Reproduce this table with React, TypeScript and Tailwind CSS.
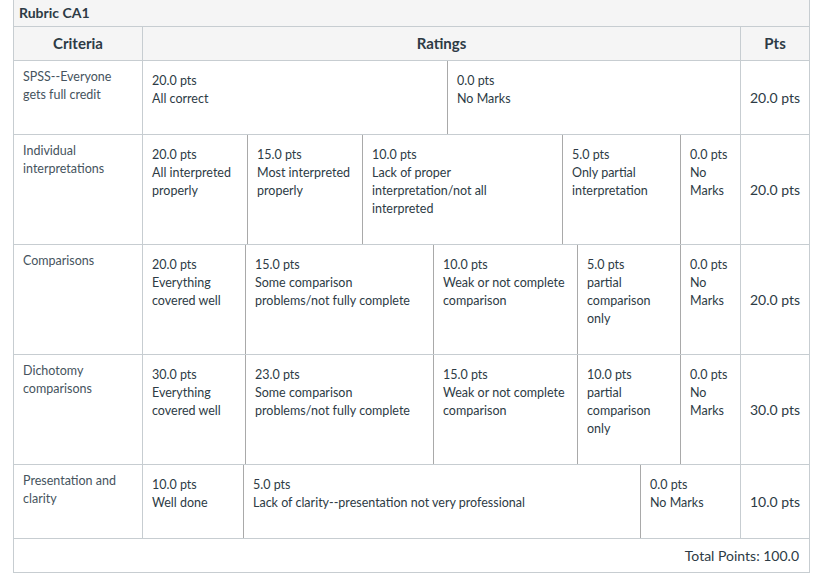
// Rubric table — criteria, rating tiers and points per row, total at the bottom.

interface Rating {
  pts: string;
  label: string;
  width: number;
}

interface Criterion {
  name: string;
  pts: string;
  ratings: Rating[];
}

const CRITERIA: Criterion[] = [
  {
    name: 'SPSS--Everyone gets full credit',
    pts: '20.0 pts',
    ratings: [
      { pts: '20.0 pts', label: 'All correct', width: 305 },
      { pts: '0.0 pts', label: 'No Marks', width: 292 },
    ],
  },
  {
    name: 'Individual interpretations',
    pts: '20.0 pts',
    ratings: [
      { pts: '20.0 pts', label: 'All interpreted properly', width: 105 },
      { pts: '15.0 pts', label: 'Most interpreted properly', width: 115 },
      // wraps one word earlier in the original
      { pts: '10.0 pts', label: 'Lack of proper interpretation/not all\ninterpreted', width: 200 },
      { pts: '5.0 pts', label: 'Only partial interpretation', width: 118 },
      { pts: '0.0 pts', label: 'No Marks', width: 59 },
    ],
  },
  {
    name: 'Comparisons',
    pts: '20.0 pts',
    ratings: [
      { pts: '20.0 pts', label: 'Everything covered well', width: 103 },
      { pts: '15.0 pts', label: 'Some comparison problems/not fully complete', width: 188 },
      { pts: '10.0 pts', label: 'Weak or not complete comparison', width: 144 },
      { pts: '5.0 pts', label: 'partial comparison only', width: 103 },
      { pts: '0.0 pts', label: 'No Marks', width: 59 },
    ],
  },
  {
    name: 'Dichotomy comparisons',
    pts: '30.0 pts',
    ratings: [
      { pts: '30.0 pts', label: 'Everything covered well', width: 103 },
      { pts: '23.0 pts', label: 'Some comparison problems/not fully complete', width: 188 },
      { pts: '15.0 pts', label: 'Weak or not complete comparison', width: 144 },
      { pts: '10.0 pts', label: 'partial comparison only', width: 103 },
      { pts: '0.0 pts', label: 'No Marks', width: 59 },
    ],
  },
  {
    name: 'Presentation and clarity',
    pts: '10.0 pts',
    ratings: [
      { pts: '10.0 pts', label: 'Well done', width: 101 },
      { pts: '5.0 pts', label: 'Lack of clarity--presentation not very professional', width: 397 },
      { pts: '0.0 pts', label: 'No Marks', width: 99 },
    ],
  },
];

export default function App(): JSX.Element {
  return (
    <div className="min-h-screen bg-white font-['Lato','Noto_Sans',sans-serif] text-[#2d3b45]">
      <div className="ml-[13px] w-[797px] border-x border-b border-[#c7cdd1]">
        <div className="h-[27px] border-b border-[#c7cdd1] bg-[#f5f5f5] pl-[5px] text-[14px] font-bold leading-[26px]">
          Rubric CA1
        </div>

        <div className="flex h-[34px] border-b border-[#c7cdd1] bg-[#f5f5f5] text-[15px] font-bold leading-[33px]">
          <div className="w-[129px] shrink-0 border-r border-[#c7cdd1] text-center">Criteria</div>
          <div className="w-[597px] shrink-0 text-center">Ratings</div>
          <div className="w-[69px] shrink-0 border-l border-[#c7cdd1] text-center">Pts</div>
        </div>

        {CRITERIA.map((c) => (
          <div key={c.name} className="flex border-b border-[#c7cdd1]">
            <div className="w-[129px] shrink-0 border-r border-[#c7cdd1] pl-[9px] pr-[10px] pt-[7px] text-[12.5px] leading-[18px] text-[#46545e]">
              {c.name}
            </div>
            <div className="flex w-[597px] shrink-0">
              {c.ratings.map((r, i) => (
                <div
                  key={r.pts + i}
                  style={{ width: r.width }}
                  className={`shrink-0 pl-[9px] pr-[10px] pt-[11px] pb-[26px] text-[12.5px] leading-[18px] ${
                    i < c.ratings.length - 1 ? 'border-r border-[#a9a9a9]' : ''
                  }`}
                >
                  <div>{r.pts}</div>
                  <div className="whitespace-pre-line">{r.label}</div>
                </div>
              ))}
            </div>
            <div className="flex w-[69px] shrink-0 items-center justify-end border-l border-[#c7cdd1] pr-[9px] text-[14px]">
              {c.pts}
            </div>
          </div>
        ))}

        <div className="h-[33px] pr-[10px] text-right text-[14px] leading-[33px]">Total Points: 100.0</div>
      </div>
    </div>
  );
}
